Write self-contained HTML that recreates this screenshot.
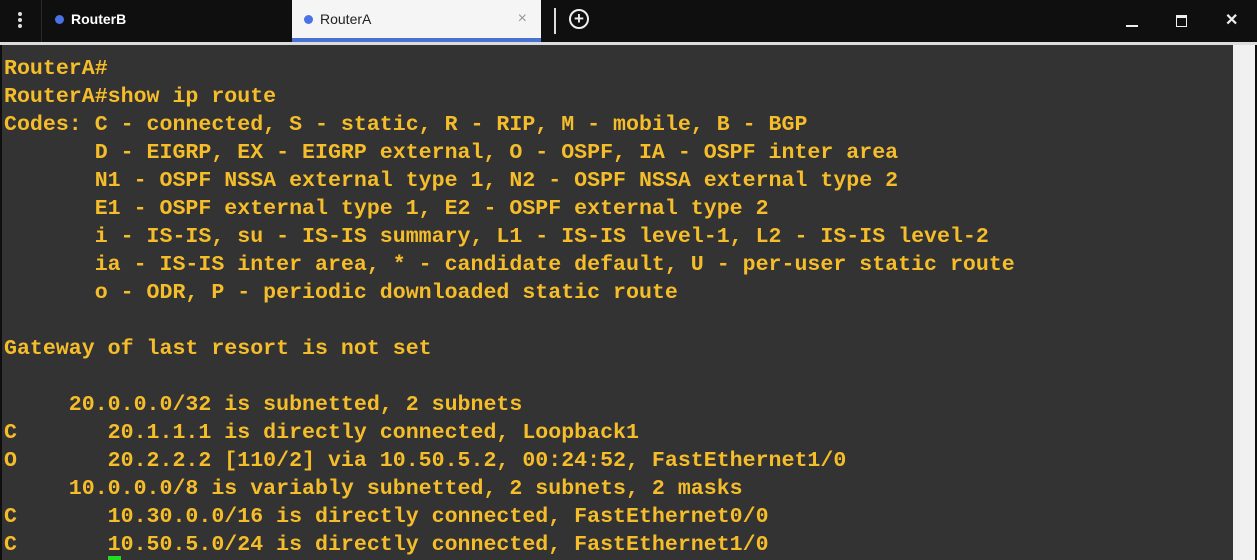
<!DOCTYPE html>
<html><head><style>
body{margin:0;width:1257px;height:560px;overflow:hidden;background:#0f0f0f;font-family:"Liberation Sans",sans-serif;position:relative}
.bar{position:absolute;left:0;top:0;width:1257px;height:42px;background:#0f0f0f}
.sep{position:absolute;left:41px;top:0;width:1px;height:42px;background:#2a2a2a}
.tab{position:absolute;top:0;height:42px;font-size:14px;line-height:38px}
.dot{display:inline-block;width:9px;height:9px;border-radius:50%;background:#4a72e6;margin-right:7px;vertical-align:0px}
.term{position:absolute;left:2px;top:45px;width:1231px;height:515px;background:#333333}
.sb{position:absolute;left:1233px;top:45px;width:22px;height:515px;background:#f0f0f0}
.edge{position:absolute;left:0;top:42px;width:1257px;height:3px;background:#dcdcdc}
pre{margin:0;position:absolute;left:4px;top:55px;font-family:"Liberation Mono","DejaVu Sans Mono",monospace;font-weight:bold;font-size:21.6px;line-height:28px;color:#f5bd2a}
</style></head><body>
<div class="bar"></div>
<div class="sep"></div>
<div style="position:absolute;left:18px;top:12px;width:4px;height:4px;background:#ddd;border-radius:2px;box-shadow:0 6px 0 #ddd,0 12px 0 #ddd"></div>
<div class="tab" style="left:55px;color:#fff;font-weight:bold"><span class="dot"></span>RouterB</div>
<div class="tab" style="left:292px;width:249px;background:#f5f5f5;color:#222;box-sizing:border-box;padding-left:12px;border-bottom:4px solid #4a72d0"><span class="dot"></span>RouterA<span style="position:absolute;right:14px;color:#999;font-size:16px">×</span></div>
<div style="position:absolute;left:554px;top:8px;width:2px;height:26px;background:#ddd"></div>
<div style="position:absolute;left:569px;top:9px;width:16px;height:16px;border:2px solid #eee;border-radius:50%;color:#eee;font-size:17px;line-height:16px;text-align:center;font-weight:bold">+</div>
<div style="position:absolute;left:1126px;top:25px;width:12px;height:2px;background:#eee"></div>
<div style="position:absolute;left:1176px;top:15px;width:9px;height:8px;border:1.5px solid #eee;border-top-width:3px"></div>
<div style="position:absolute;left:1225px;top:10px;color:#eee;font-size:16px;font-weight:bold">✕</div>
<div class="edge"></div>
<div class="term"></div>
<div class="sb"></div>
<pre>RouterA#
RouterA#show ip route
Codes: C - connected, S - static, R - RIP, M - mobile, B - BGP
       D - EIGRP, EX - EIGRP external, O - OSPF, IA - OSPF inter area
       N1 - OSPF NSSA external type 1, N2 - OSPF NSSA external type 2
       E1 - OSPF external type 1, E2 - OSPF external type 2
       i - IS-IS, su - IS-IS summary, L1 - IS-IS level-1, L2 - IS-IS level-2
       ia - IS-IS inter area, * - candidate default, U - per-user static route
       o - ODR, P - periodic downloaded static route

Gateway of last resort is not set

     20.0.0.0/32 is subnetted, 2 subnets
C       20.1.1.1 is directly connected, Loopback1
O       20.2.2.2 [110/2] via 10.50.5.2, 00:24:52, FastEthernet1/0
     10.0.0.0/8 is variably subnetted, 2 subnets, 2 masks
C       10.30.0.0/16 is directly connected, FastEthernet0/0
C       10.50.5.0/24 is directly connected, FastEthernet1/0</pre>
<div style="position:absolute;left:108px;top:556px;width:13px;height:4px;background:#22dd22"></div>
</body></html>
